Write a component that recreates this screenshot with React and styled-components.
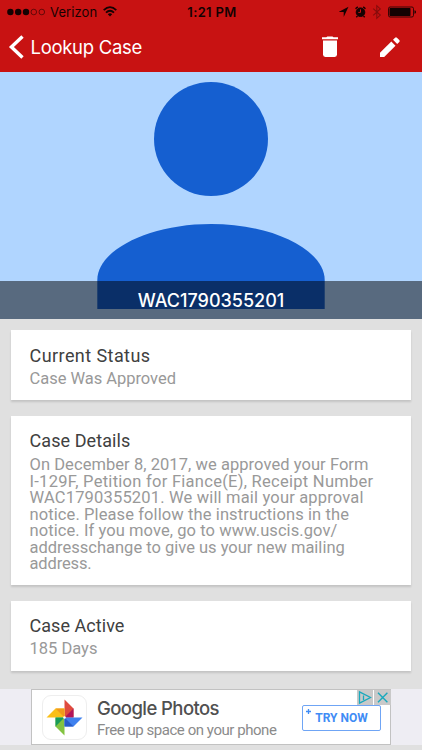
import React, { Component } from 'react'
import styled, { createGlobalStyle } from 'styled-components'

const GlobalStyle = createGlobalStyle`
    * {
        box-sizing: border-box;
    }
    body {
        margin: 0;
        background: #e0e0e0;
        font-family: Inter, "Liberation Sans", sans-serif;
    }
`

const ScreenDiv = styled.div`
    width: 422px;
    height: 750px;
    display: flex;
    flex-direction: column;
    overflow: hidden;
    background: #e0e0e0;
`

const HeaderDiv = styled.header`
    height: 72px;
    flex: none;
    background: #c81212;
`

const StatusBar = styled.div`
    height: 23px;
    display: grid;
    grid-template-columns: 1fr auto 1fr;
    align-items: center;
    padding: 0 5px 0 7px;
    color: #140202;
    font-size: 13px;
`

const StatusSide = styled.div`
    display: flex;
    align-items: center;
    justify-content: ${props => props.$end ? 'flex-end' : 'flex-start'};
`

const Carrier = styled.span`
    margin: 0 6px 0 4px;
    letter-spacing: 0.1px;
`

const Clock = styled.span`
    font-weight: 600;
    letter-spacing: 0.35px;
`

const NavBar = styled.div`
    height: 49px;
    display: flex;
    align-items: center;
    padding: 0 21px 2px 8px;
    color: #fff;
`

const NavTitle = styled.h1`
    flex: 1;
    margin: 0 0 0 6.5px;
    font-size: 18.5px;
    font-weight: 400;
    line-height: 24px;
    letter-spacing: -0.3px;
`

const NavButton = styled.button`
    display: flex;
    padding: 0;
    margin-left: ${props => props.$gap || 0}px;
    border: 0;
    background: none;
    color: inherit;
`

const PhotoDiv = styled.div`
    position: relative;
    height: 247px;
    flex: none;
    background: #b0d5ff;
`

const CaptionDiv = styled.div`
    position: absolute;
    left: 0;
    right: 0;
    bottom: 0;
    height: 38px;
    line-height: 39px;
    text-align: center;
    background: rgba(0, 0, 0, 0.5);
    color: #fff;
    font-size: 18px;
    font-weight: 500;
`

const CardList = styled.div`
    flex: 1;
    display: flex;
    flex-direction: column;
    gap: 16px;
    padding: 11px 11px 0;
`

const CardDiv = styled.section`
    height: ${props => props.$height}px;
    padding: ${props => props.$pad}px 18px 0 18.5px;
    background: #fff;
    box-shadow: 0 2px 2px rgba(0, 0, 0, 0.13);
    font-family: Roboto, "Liberation Sans", sans-serif;
`

const CardTitle = styled.h2`
    margin: 0;
    color: #404040;
    font-size: 18px;
    font-weight: 400;
    line-height: 22px;
    letter-spacing: ${props => props.$spacing}px;
`

const CardLine = styled.div`
    color: #999;
    font-size: 16.5px;
    line-height: 16.5px;
    white-space: nowrap;
    letter-spacing: ${props => props.$spacing}px;
`

const CardBody = styled.div`
    padding-top: ${props => props.$top}px;
`

const AdStrip = styled.div`
    height: 56px;
    flex: none;
    display: flex;
    justify-content: center;
    margin-bottom: 5px;
    background: #eeedf3;
`

const AdBox = styled.div`
    position: relative;
    width: 360px;
    display: flex;
    padding: 5px 9px 0 10px;
    border: 1px solid #c2c2c2;
    background: #fff;
    font-family: Roboto, "Liberation Sans", sans-serif;
`

const AdIcon = styled.div`
    width: 45px;
    height: 45px;
    flex: none;
    display: flex;
    align-items: center;
    justify-content: center;
    border: 1px solid #eee;
    border-radius: 9px;
`

const AdText = styled.div`
    flex: 1;
    padding: 1px 0 0 10px;
    white-space: nowrap;
`

const AdTitle = styled.div`
    height: 26px;
    line-height: 25px;
    color: #505050;
    font-family: Inter, "Liberation Sans", sans-serif;
    font-size: 18.5px;
    font-weight: 500;
    letter-spacing: -0.58px;
`

const AdSubtitle = styled.div`
    line-height: 17px;
    color: #8b8b8b;
    font-size: 15px;
    letter-spacing: -0.45px;
`

const TryButton = styled.button`
    position: relative;
    width: 79px;
    height: 26px;
    margin-top: 10px;
    padding: 0;
    border: 1.5px solid #6fa5f5;
    border-radius: 2px;
    background: #fff;
    color: #3f8cf5;
    font-family: Roboto, "Liberation Sans", sans-serif;
    font-size: 12px;
    font-weight: 700;
`

const TryPlus = styled.svg`
    position: absolute;
    left: 2px;
    top: 2px;
`

const AdBadges = styled.div`
    position: absolute;
    top: 0;
    right: -1px;
    display: flex;
    gap: 1px;
`

const BadgeSvg = styled.svg`
    display: block;
    background: #c9c9c9;
`

const details = [
  ['On December 8, 2017, we approved your Form', 0.06],
  ['I-129F, Petition for Fiance(E), Receipt Number', 0.27],
  ['WAC1790355201. We will mail your approval', 0.17],
  ['notice. Please follow the instructions in the', 0.1],
  ['notice. If you move, go to www.uscis.gov/', 0.08],
  ['addresschange to give us your new mailing', 0],
  ['address.', -0.15]
]

const cards = [
  { title: 'Current Status', spacing: 0.43, height: 70, pad: 15, top: 4, lines: [['Case Was Approved', -0.03]] },
  { title: 'Case Details', spacing: 0.08, height: 169, pad: 14, top: 5, lines: details },
  { title: 'Case Active', spacing: 0.05, height: 70, pad: 14, top: 4, lines: [['185 Days', 0]] }
]

const SignalIcon = () => (
  <svg width="39" height="8" viewBox="0 0 39 8" fill="#140202">
    <circle cx="3.4" cy="4" r="3.2" />
    <circle cx="11.2" cy="4" r="3.2" />
    <circle cx="19" cy="4" r="3.2" />
    <circle cx="26.8" cy="4" r="2.8" fill="none" stroke="#3b0505" strokeWidth="0.7" />
    <circle cx="34.8" cy="4" r="2.8" fill="none" stroke="#3b0505" strokeWidth="0.7" />
  </svg>
)

const WifiIcon = () => (
  <svg width="14" height="11" viewBox="0 0 14 11" fill="none" stroke="#140202" strokeWidth="1.8">
    <path d="M0.7 4.1Q7-1.9 13.3 4.1" />
    <path d="M3 6.6Q7 2.8 11 6.6" />
    <path d="M7 10.4L4.8 8.2Q7 6.3 9.2 8.2Z" fill="#140202" stroke="none" />
  </svg>
)

const StatusIcons = () => (
  <svg width="78" height="16" viewBox="0 0 78 16">
    <path d="M9.5 2.7L-0.5 7.9H4.7V12.9Z" fill="#140202" />
    <g fill="none" stroke="#140202">
      <circle cx="21.5" cy="8.2" r="4.3" fill="#140202" />
      <path d="M16.5 4.8L18.8 2.9M26.5 4.8L24.2 2.9M18.5 12L17.3 13.2M24.5 12L25.7 13.2" strokeWidth="1.4" />
      <path d="M21.5 5.3V8.4H19.3" stroke="#c81212" strokeWidth="1" />
      <path d="M34.2 4.7L41.3 11.1L37.8 14.3V1.7L41.3 4.9L34.2 11.3" stroke="#850c0c" strokeWidth="1.1" />
      <rect x="49.5" y="3" width="25" height="10" rx="1.6" strokeWidth="0.8" />
    </g>
    <rect x="50.5" y="4" width="21" height="8" rx="0.7" fill="#140202" />
    <path d="M75.5 6.2Q77 6.5 77 8Q77 9.5 75.5 9.8Z" fill="#140202" />
  </svg>
)

const BackIcon = () => (
  <svg width="16" height="24" viewBox="0 0 16 24" fill="none" stroke="#fff" strokeWidth="3.4">
    <path d="M14.5 1.5L3.4 12L14.5 22.5" />
  </svg>
)

const TrashIcon = () => (
  <svg width="18" height="22" viewBox="0 0 18 22" fill="#fff">
    <path d="M1 1.3H5.3L6.3 0.4H11.5L12.5 1.3H17V3.3H1Z" />
    <path d="M2 4.4H16V18.6Q16 21 13.7 21H4.3Q2 21 2 18.6Z" />
  </svg>
)

const PencilIcon = () => (
  <svg width="22" height="22" viewBox="0 0 22 22" fill="#fff">
    <path d="M1 16.8L12.3 5.5L16.5 9.7L5.2 21H1Z" />
    <path d="M14 3.8L16.1 1.7Q17 0.8 17.9 1.7L20.3 4.1Q21.2 5 20.3 5.9L18.2 8Z" />
  </svg>
)

const PersonIcon = () => (
  <svg width="422" height="247" viewBox="0 0 422 247" fill="#155fd0">
    <circle cx="211" cy="67" r="57" />
    <path d="M97.3 237V208C97.3 178 149 152 211 152S324.7 178 324.7 208V237Z" />
  </svg>
)

const PhotosLogo = () => (
  <svg width="37" height="37" viewBox="0 0 37 37">
    <path d="M18.5 0.5L27.5 9.5V18.5L18.5 18.5Z" fill="#df4b3e" />
    <path d="M18.5 18.5L27.5 9.5V18.5Z" fill="#b0155b" />
    <path d="M0.5 18.5L9.5 9.5H18.5V18.5Z" fill="#fbbf18" />
    <path d="M9.5 9.5H18.5V18.5Z" fill="#f19a1c" />
    <path d="M18.5 36.5L9.5 27.5V18.5H18.5Z" fill="#83c341" />
    <path d="M9.5 18.5H18.5L9.5 27.5Z" fill="#199b58" />
    <path d="M36.5 18.5L27.5 27.5H18.5V18.5Z" fill="#3f81ef" />
    <path d="M18.5 18.5L27.5 27.5H18.5Z" fill="#285dc8" />
    <circle cx="18.5" cy="18.5" r="1.3" fill="#fff" />
  </svg>
)

class App extends Component {
  render() {
    return (
      <ScreenDiv>
        <GlobalStyle />
        <HeaderDiv>
          <StatusBar>
            <StatusSide>
              <SignalIcon />
              <Carrier>Verizon</Carrier>
              <WifiIcon />
            </StatusSide>
            <Clock>1:21 PM</Clock>
            <StatusSide $end>
              <StatusIcons />
            </StatusSide>
          </StatusBar>
          <NavBar>
            <NavButton aria-label="Back"><BackIcon /></NavButton>
            <NavTitle>Lookup Case</NavTitle>
            <NavButton aria-label="Delete"><TrashIcon /></NavButton>
            <NavButton aria-label="Edit" $gap={40}><PencilIcon /></NavButton>
          </NavBar>
        </HeaderDiv>
        <PhotoDiv>
          <PersonIcon />
          <CaptionDiv>WAC1790355201</CaptionDiv>
        </PhotoDiv>
        <CardList>
          {cards.map(card => (
            <CardDiv key={card.title} $height={card.height} $pad={card.pad}>
              <CardTitle $spacing={card.spacing}>{card.title}</CardTitle>
              <CardBody $top={card.top}>
                {card.lines.map(([text, spacing]) => (
                  <CardLine key={text} $spacing={spacing}>{text}</CardLine>
                ))}
              </CardBody>
            </CardDiv>
          ))}
        </CardList>
        <AdStrip>
          <AdBox>
            <AdIcon><PhotosLogo /></AdIcon>
            <AdText>
              <AdTitle>Google Photos</AdTitle>
              <AdSubtitle>Free up space on your phone</AdSubtitle>
            </AdText>
            <TryButton>
              <TryPlus width="7" height="7" viewBox="0 0 7 7" stroke="#3f8cf5" strokeWidth="1.3">
                <path d="M3.5 1V6M1 3.5H6" />
              </TryPlus>
              TRY NOW
            </TryButton>
            <AdBadges>
              <BadgeSvg width="16" height="15" viewBox="0 0 16 15" fill="none" stroke="#19a9bd" strokeWidth="1.3">
                <path d="M2.5 1.8L13.5 7.5L2.5 13.2ZM6.5 5.5V10" />
              </BadgeSvg>
              <BadgeSvg width="17" height="15" viewBox="0 0 17 15" fill="none" stroke="#19a9bd" strokeWidth="1.4">
                <path d="M4 2.8L13.4 12.2M13.4 2.8L4 12.2" />
              </BadgeSvg>
            </AdBadges>
          </AdBox>
        </AdStrip>
      </ScreenDiv>
    )
  }
}

export default App
